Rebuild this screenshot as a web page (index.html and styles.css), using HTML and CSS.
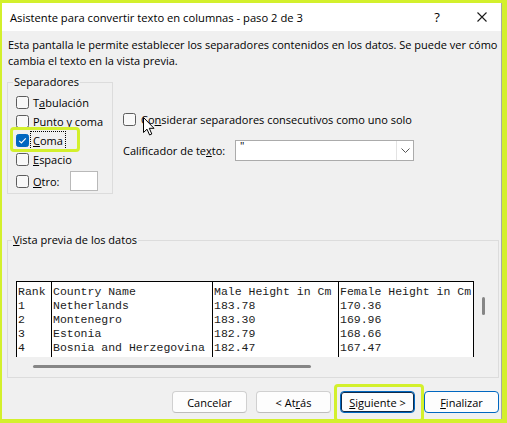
FILE: index.html
```html
<!DOCTYPE html>
<html lang="es">
<head>
<meta charset="utf-8">
<title>Asistente para convertir texto en columnas</title>
<link rel="stylesheet" href="styles.css">
</head>
<body>
<div class="window">
  <div class="titlebar">
    <span class="title">Asistente para convertir texto en columnas - paso 2 de 3</span>
    <span class="help">?</span>
    <span class="close"><svg width="10" height="10" viewBox="0 0 10 10"><path d="M0.5 0.5 L9.5 9.5 M9.5 0.5 L0.5 9.5" stroke="#1a1a1a" stroke-width="1.1" fill="none"/></svg></span>
  </div>
  <div class="content">
    <p class="desc">Esta pantalla le permite establecer los separadores contenidos en los datos. Se puede ver cómo<br>cambia el texto en la vista previa.</p>
    <div class="top">
      <fieldset class="seps">
        <legend>Separadores</legend>
        <div class="row"><span class="box"></span><span>T<u>a</u>bulación</span></div>
        <div class="row"><span class="box"></span><span>Punto y coma</span></div>
        <div class="row"><span class="box checked"><svg width="13" height="13" viewBox="0 0 13 13"><path d="M3.2 6.8 L5.4 9 L9.8 4.4" stroke="#fff" stroke-width="1.1" fill="none"/></svg></span><span class="focus"><u>C</u>oma</span></div>
        <div class="row"><span class="box"></span><span><u>E</u>spacio</span></div>
        <div class="row other"><span class="box"></span><span><u>O</u>tro:</span><span class="otherbox"></span></div>
      </fieldset>
      <div class="opts">
        <div class="row"><span class="box"></span><span>Co<u>n</u>siderar separadores consecutivos como uno solo</span></div>
        <div class="qual">
          <span class="qlabel">Calificador de te<u>x</u>to:</span>
          <div class="combo"><span class="cval">"</span><span class="carrow"><svg width="9" height="5" viewBox="0 0 9 5"><path d="M0.5 0.5 L4.5 4.5 L8.5 0.5" stroke="#555" stroke-width="1" fill="none"/></svg></span></div>
        </div>
      </div>
    </div>
    <fieldset class="preview">
      <legend><u>V</u>ista previa de los datos</legend>
      <div class="pvbody">
        <div class="table">
          <div class="col c1"><div>Rank</div><div>1</div><div>2</div><div>3</div><div>4</div></div>
          <div class="col c2"><div>Country Name</div><div>Netherlands</div><div>Montenegro</div><div>Estonia</div><div>Bosnia and Herzegovina</div></div>
          <div class="col c3"><div>Male Height in Cm</div><div>183.78</div><div>183.30</div><div>182.79</div><div>182.47</div></div>
          <div class="col c4"><div>Female Height in Cm</div><div>170.36</div><div>169.96</div><div>168.66</div><div>167.47</div></div>
        </div>
        <div class="vscroll"><span class="vthumb"></span></div>
      </div>
      <div class="hscroll"><span class="hthumb"></span></div>
    </fieldset>
    <div class="buttons">
      <button class="btn">Cancelar</button>
      <button class="btn">&lt; At<u>r</u>ás</button>
      <button class="btn primary"><u>S</u>iguiente &gt;</button>
      <button class="btn default"><u>F</u>inalizar</button>
    </div>
  </div>
  <span class="hl hl-coma"></span>
  <span class="hl hl-next"></span>
  <svg class="cursor" width="12" height="19" viewBox="0 0 12 19"><path d="M0.5 0.5 L0.5 15.5 L4 12.2 L6.6 18 L8.8 17 L6.3 11.3 L11 11.3 Z" fill="#fff" stroke="#000" stroke-width="1"/></svg>
</div>
</body>
</html>
```
FILE: styles.css
```css
* { box-sizing: border-box; }
html, body { margin: 0; padding: 0; }
body {
  background: #d3f02c;
  padding: 3px 5px 4px 2px;
  font-family: "Open Sans", "Noto Sans", "Liberation Sans", sans-serif;
  font-size: 11px;
  color: #000;
}
.window {
  position: relative;
  width: 500px;
  height: 416px;
  background: #f0f0f0;
  border-right: 1px solid #a8a8a8;
}
.titlebar {
  height: 28px;
  background: #fff;
  display: flex;
  align-items: center;
  padding-left: 8px;
}
.title { flex: 1; font-size: 11.2px; white-space: nowrap; }
.help { width: 20px; text-align: center; font-size: 13px; margin-right: 25px; }
.close { width: 20px; display: flex; justify-content: center; margin-right: 9px; }
.content { padding: 0 2px 0 5px; }
.desc {
  margin: 6px 0 0 0;
  padding-left: 1px;
  line-height: 16px;
  white-space: nowrap;
}
.top { display: flex; align-items: flex-start; gap: 10px; margin-top: 5px; }
fieldset {
  margin: 0;
  border: 1px solid #dcdcdc;
  min-width: 0;
}
legend { padding: 0 1px; line-height: 16px; }
.seps { width: 106px; padding: 0 6px 2px 5px; }
.seps .row:first-of-type { margin-top: 3px; }
.row { display: flex; align-items: center; height: 19px; gap: 4px; padding-left: 3px; white-space: nowrap; }
.row.other { height: 20px; margin-top: 2px; }
.box {
  width: 13px; height: 13px;
  border: 1px solid #5c5c5c;
  border-radius: 2.5px;
  background: #f8f8f8;
  flex: none;
  display: flex;
}
.box.checked { background: #0067c0; border-color: #0067c0; }
.box.checked svg { margin: -1px; }
.focus { outline: 1px dotted #000; outline-offset: 1px; padding: 0 1px; margin-left: -1px; }
.otherbox { width: 28px; height: 20px; background: #fff; border: 1px solid #b9b9b9; margin-left: 6px; }
.opts { margin-top: 36px; }
.opts .row { padding-left: 0; gap: 5px; }
.qual { display: flex; align-items: center; margin-top: 11px; }
.qlabel { width: 112px; white-space: nowrap; }
.combo {
  width: 179px; height: 21px;
  background: #fff;
  border: 1px solid #ababab;
  display: flex;
  justify-content: space-between;
}
.cval { padding: 0 0 0 4px; line-height: 10px; }
.carrow { width: 17px; border-left: 1px solid #e3e3e3; display: flex; align-items: center; justify-content: center; }
.preview { width: 492px; margin-top: 38px; padding: 0 0 9px 4px; }
.pvbody { display: flex; margin-top: 33px; margin-left: 4px; }
.table {
  display: flex;
  width: 458px;
  height: 76px;
  background: #fff;
  border-top: 1px solid #000;
  border-right: 1px solid #000;
  font-family: "Liberation Mono", "Courier New", monospace;
  font-size: 11.5px;
  line-height: 14px;
  color: #1c1c1c;
  padding-top: 3px;
  overflow: hidden;
}
.col { border-left: 1px solid #000; padding-left: 1px; white-space: nowrap; overflow: hidden; margin-top: -3px; padding-top: 3px; }
.c1 { width: 35px; }
.c2 { width: 161px; }
.c3 { width: 126px; }
.c4 { flex: 1; }
.vscroll { margin-left: 8px; padding-top: 16px; }
.vthumb { display: block; width: 3px; height: 18px; background: #868686; border-radius: 1.5px; }
.hscroll { margin: 8px 0 0 21px; }
.hthumb { display: block; width: 278px; height: 3px; background: #868686; border-radius: 1.5px; }
.buttons { display: flex; justify-content: flex-end; gap: 9px; margin-top: 13px; }
.btn {
  width: 75px; height: 22px;
  font: inherit;
  background: #fdfdfd;
  border: 1px solid #d0d0d0;
  border-bottom-color: #bdbdbd;
  border-radius: 4px;
  padding: 0;
  color: #000;
}
.btn.primary { border-color: #0067c0; box-shadow: inset 0 0 0 1px #0f2b4a; }
.btn.default { border-color: #0067c0; }
.hl {
  position: absolute;
  border: 3px solid #d3f02c;
  border-radius: 4px;
}
.hl-coma { left: 8px; top: 124px; width: 70px; height: 25px; }
.hl-next { left: 332px; top: 381px; width: 90px; height: 38px; }
.cursor { position: absolute; left: 141px; top: 114px; }
```
